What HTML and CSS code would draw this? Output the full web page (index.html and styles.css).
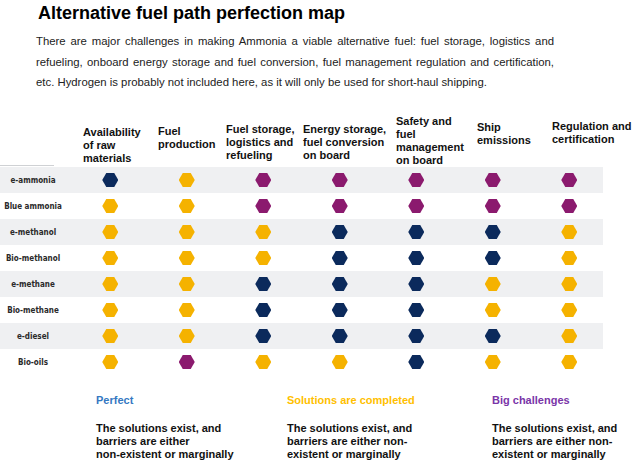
FILE: index.html
```html
<!DOCTYPE html>
<html lang="en">
<head>
<meta charset="utf-8">
<title>Alternative fuel path perfection map</title>
<link rel="stylesheet" href="styles.css">
</head>
<body>
<main class="page">
  <header class="intro">
    <h1 class="title">Alternative fuel path perfection map</h1>
    <p class="lead">There are major challenges in making Ammonia a viable alternative fuel: fuel storage, logistics and refueling, onboard energy storage and fuel conversion, fuel management regulation and certification, etc. Hydrogen is probably not included here, as it will only be used for short-haul shipping.</p>
  </header>

  <section class="matrix">
    <div class="matrix-head">
      <div class="head-rule"></div>
      <div class="head h1">Availability of raw materials</div>
      <div class="head h2">Fuel production</div>
      <div class="head h3">Fuel storage, logistics and refueling</div>
      <div class="head h4">Energy storage, fuel conversion on board</div>
      <div class="head h5">Safety and fuel management on board</div>
      <div class="head h6">Ship emissions</div>
      <div class="head h7">Regulation and certification</div>
    </div>

    <div class="row alt">
      <span class="fuel">e-ammonia</span>
      <span class="cell"><i class="hex navy"></i></span>
      <span class="cell"><i class="hex yellow"></i></span>
      <span class="cell"><i class="hex purple"></i></span>
      <span class="cell"><i class="hex purple"></i></span>
      <span class="cell"><i class="hex purple"></i></span>
      <span class="cell"><i class="hex purple"></i></span>
      <span class="cell"><i class="hex purple"></i></span>
    </div>
    <div class="row">
      <span class="fuel">Blue ammonia</span>
      <span class="cell"><i class="hex yellow"></i></span>
      <span class="cell"><i class="hex yellow"></i></span>
      <span class="cell"><i class="hex purple"></i></span>
      <span class="cell"><i class="hex purple"></i></span>
      <span class="cell"><i class="hex purple"></i></span>
      <span class="cell"><i class="hex purple"></i></span>
      <span class="cell"><i class="hex purple"></i></span>
    </div>
    <div class="row alt">
      <span class="fuel">e-methanol</span>
      <span class="cell"><i class="hex yellow"></i></span>
      <span class="cell"><i class="hex yellow"></i></span>
      <span class="cell"><i class="hex yellow"></i></span>
      <span class="cell"><i class="hex navy"></i></span>
      <span class="cell"><i class="hex navy"></i></span>
      <span class="cell"><i class="hex navy"></i></span>
      <span class="cell"><i class="hex yellow"></i></span>
    </div>
    <div class="row">
      <span class="fuel">Bio-methanol</span>
      <span class="cell"><i class="hex yellow"></i></span>
      <span class="cell"><i class="hex yellow"></i></span>
      <span class="cell"><i class="hex yellow"></i></span>
      <span class="cell"><i class="hex navy"></i></span>
      <span class="cell"><i class="hex navy"></i></span>
      <span class="cell"><i class="hex navy"></i></span>
      <span class="cell"><i class="hex yellow"></i></span>
    </div>
    <div class="row alt">
      <span class="fuel">e-methane</span>
      <span class="cell"><i class="hex yellow"></i></span>
      <span class="cell"><i class="hex yellow"></i></span>
      <span class="cell"><i class="hex navy"></i></span>
      <span class="cell"><i class="hex navy"></i></span>
      <span class="cell"><i class="hex navy"></i></span>
      <span class="cell"><i class="hex yellow"></i></span>
      <span class="cell"><i class="hex yellow"></i></span>
    </div>
    <div class="row">
      <span class="fuel">Bio-methane</span>
      <span class="cell"><i class="hex yellow"></i></span>
      <span class="cell"><i class="hex yellow"></i></span>
      <span class="cell"><i class="hex navy"></i></span>
      <span class="cell"><i class="hex navy"></i></span>
      <span class="cell"><i class="hex navy"></i></span>
      <span class="cell"><i class="hex yellow"></i></span>
      <span class="cell"><i class="hex yellow"></i></span>
    </div>
    <div class="row alt">
      <span class="fuel">e-diesel</span>
      <span class="cell"><i class="hex yellow"></i></span>
      <span class="cell"><i class="hex yellow"></i></span>
      <span class="cell"><i class="hex navy"></i></span>
      <span class="cell"><i class="hex navy"></i></span>
      <span class="cell"><i class="hex navy"></i></span>
      <span class="cell"><i class="hex navy"></i></span>
      <span class="cell"><i class="hex yellow"></i></span>
    </div>
    <div class="row">
      <span class="fuel">Bio-oils</span>
      <span class="cell"><i class="hex yellow"></i></span>
      <span class="cell"><i class="hex purple"></i></span>
      <span class="cell"><i class="hex yellow"></i></span>
      <span class="cell"><i class="hex yellow"></i></span>
      <span class="cell"><i class="hex navy"></i></span>
      <span class="cell"><i class="hex yellow"></i></span>
      <span class="cell"><i class="hex yellow"></i></span>
    </div>
  </section>

  <section class="legend">
    <div class="legend-item">
      <h2 class="legend-title perfect">Perfect</h2>
      <p class="legend-text free">The solutions exist, and<br>barriers are either<br>non-existent or marginally</p>
    </div>
    <div class="legend-item">
      <h2 class="legend-title solved">Solutions are completed</h2>
      <p class="legend-text">The solutions exist, and barriers are either non-existent or marginally</p>
    </div>
    <div class="legend-item">
      <h2 class="legend-title challenge">Big challenges</h2>
      <p class="legend-text">The solutions exist, and barriers are either non-existent or marginally</p>
    </div>
  </section>
</main>
</body>
</html>
```

FILE: styles.css
```css
* { box-sizing: border-box; }

html, body {
  margin: 0;
  padding: 0;
  background: #ffffff;
}

body {
  font-family: "Liberation Sans", Arial, sans-serif;
  color: #000;
  width: 640px;
  height: 466px;
  overflow: hidden;
}

.page {
  display: flex;
  flex-direction: column;
}

/* Intro */
.intro {
  padding: 2px 0 0 36px;
}

.title {
  margin: 0 0 0 2px;
  font-family: "Liberation Sans Narrow", "Arial Narrow", "Liberation Sans", sans-serif;
  font-size: 18px;
  line-height: 22px;
  font-weight: bold;
  color: #000;
}

.lead {
  margin: 7px 0 0;
  width: 518px;
  font-size: 11.35px;
  line-height: 20.5px;
  color: #222;
  text-align: justify;
}

/* Matrix */
.matrix {
  margin-top: 22px;
  display: flex;
  flex-direction: column;
}

.matrix-head {
  height: 52.5px;
  display: grid;
  grid-template-columns: 83px 75px 68px 77px 93px 81px 75px 88px;
  align-items: start;
}

.head-rule {
  align-self: end;
  width: 54px;
  height: 1px;
  margin-bottom: 1px;
  background: #cfd1d4;
}

.head {
  font-size: 11px;
  line-height: 13px;
  font-weight: bold;
  color: #111;
}

.h1 { width: 66px; margin-top: 11px; }
.h2 { width: 66px; margin-top: 10px; }
.h3 { width: 74px; margin-top: 8px; }
.h4 { width: 88px; margin-top: 8px; }
.h5 { width: 72px; margin-top: 0; }
.h6 { width: 70px; margin-top: 6px; }
.h7 { width: 86px; margin-top: 5px; }

.row {
  width: 603px;
  height: 26px;
  display: grid;
  grid-template-columns: 72px repeat(7, 76.5px);
  align-items: center;
}

.row.alt {
  background: #eff0f2;
}

.fuel {
  padding-right: 6px;
  text-align: center;
  font-family: "DejaVu Sans Condensed", "DejaVu Sans", sans-serif;
  font-stretch: condensed;
  font-weight: bold;
  font-size: 8px;
  color: #2a2a2a;
  white-space: nowrap;
}

.cell {
  display: flex;
  justify-content: center;
  align-items: center;
}

.hex {
  display: block;
  width: 16px;
  height: 14px;
  clip-path: polygon(25% 0, 75% 0, 100% 50%, 75% 100%, 25% 100%, 0 50%);
}

.navy { background: #0b2a5c; }
.yellow { background: #f5b200; }
.purple { background: #8b1a6e; }

/* Legend */
.legend {
  margin-top: 18.7px;
  display: grid;
  grid-template-columns: 96px 191px 205px 1fr;
}

.legend-item:first-child { grid-column: 2; }

.legend-title {
  margin: 0;
  font-size: 11px;
  line-height: 13px;
  font-weight: bold;
}

.perfect { color: #3478c2; }
.solved { color: #ffc000; }
.challenge { color: #7a35a8; }

.legend-text {
  margin: 15.5px 0 0;
  width: 128px;
  font-size: 11px;
  line-height: 12.7px;
  font-weight: bold;
  color: #111;
}

.legend-text.free {
  width: auto;
  white-space: nowrap;
}
```
